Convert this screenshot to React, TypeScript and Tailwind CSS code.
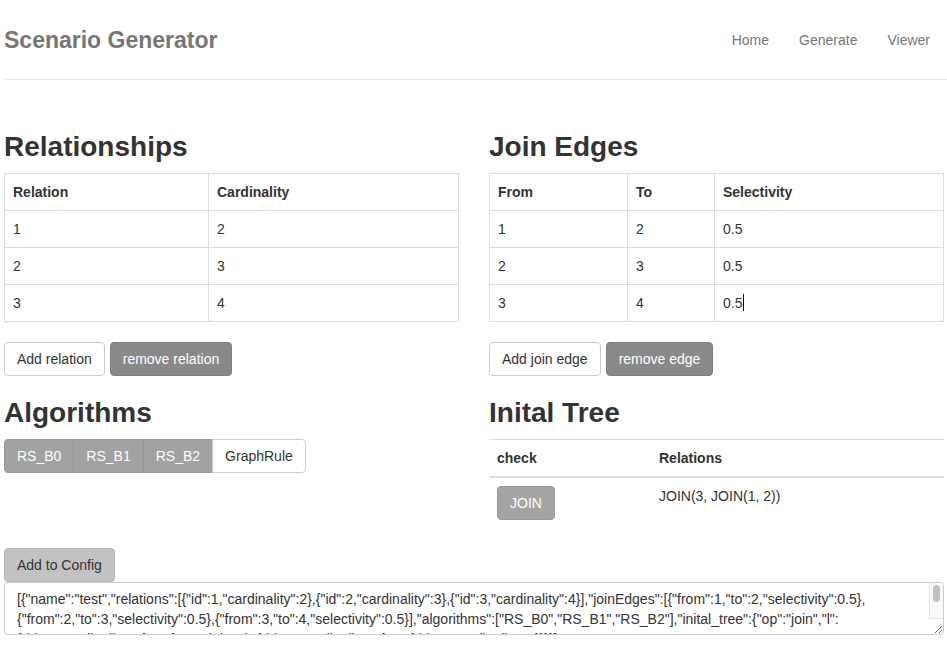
import React from "react";

const font = "font-['Liberation_Sans','Helvetica_Neue',Helvetica,Arial,sans-serif]";

const configJson =
  '[{"name":"test","relations":[{"id":1,"cardinality":2},{"id":2,"cardinality":3},{"id":3,"cardinality":4}],"joinEdges":[{"from":1,"to":2,"selectivity":0.5},{"from":2,"to":3,"selectivity":0.5},{"from":3,"to":4,"selectivity":0.5}],"algorithms":["RS_B0","RS_B1","RS_B2"],"inital_tree":{"op":"join","l":{"id":3,"cardinality":4},"r":{"op":"join","l":{"id":1,"cardinality":2},"r":{"id":2,"cardinality":3}}}}]';

function Heading({ children, first }: { children: React.ReactNode; first?: boolean }) {
  return (
    <h2
      className={`${first ? "mt-[52px]" : "mt-[22px]"} mb-[10px] text-[28px] leading-[1.1] font-bold text-[#333]`}
    >
      {children}
    </h2>
  );
}

function Btn({ children, variant }: { children: React.ReactNode; variant: "default" | "dark" }) {
  const look =
    variant === "default"
      ? "bg-white border-[#ccc] text-[#333]"
      : "bg-[#898989] border-[#7e7e7e] text-white";
  return (
    <button
      type="button"
      className={`inline-flex h-[34px] items-center rounded-[4px] border px-[12px] text-[14px] leading-[20px] ${look}`}
    >
      {children}
    </button>
  );
}

function BorderedTable({ head, rows, widths }: { head: string[]; rows: React.ReactNode[][]; widths: string[] }) {
  return (
    <table className="mb-[20px] w-full border-collapse text-[14px] leading-[20px]">
      <thead>
        <tr>
          {head.map((h, i) => (
            <th key={h} className={`${widths[i]} border border-[#ddd] p-[8px] text-left font-bold`}>
              {h}
            </th>
          ))}
        </tr>
      </thead>
      <tbody>
        {rows.map((r, ri) => (
          <tr key={ri}>
            {r.map((c, ci) => (
              <td key={ci} className="border border-[#ddd] p-[8px]">
                {c}
              </td>
            ))}
          </tr>
        ))}
      </tbody>
    </table>
  );
}

export default function App() {
  return (
    <div className={`${font} min-h-[650px] bg-white pl-[4px] text-[14px] leading-[20px] text-[#333]`}>
      <header className="flex h-[80px] items-center justify-between border-b border-[#e7e7e7] pr-[2px]">
        <span className="text-[23px] font-bold text-[#777]">Scenario Generator</span>
        <nav className="flex text-[14px] text-[#777]">
          <a className="px-[15px]">Home</a>
          <a className="px-[15px]">Generate</a>
          <a className="px-[15px]">Viewer</a>
        </nav>
      </header>

      <main className="mr-[3px]">
        <div className="grid grid-cols-2 gap-x-[30px]">
          <section>
            <Heading first>Relationships</Heading>
            <BorderedTable
              head={["Relation", "Cardinality"]}
              widths={["w-[204px]", ""]}
              rows={[
                ["1", "2"],
                ["2", "3"],
                ["3", "4"],
              ]}
            />
            <div className="flex gap-[5px]">
              <Btn variant="default">Add relation</Btn>
              <Btn variant="dark">remove relation</Btn>
            </div>
            <Heading>Algorithms</Heading>
            <div className="flex">
              {["RS_B0", "RS_B1", "RS_B2"].map((a, i) => (
                <button
                  key={a}
                  type="button"
                  className={`h-[34px] border border-[#959595] bg-[#a2a2a2] px-[12px] text-[14px] text-white ${
                    i === 0 ? "rounded-l-[4px]" : "-ml-px"
                  }`}
                >
                  {a}
                </button>
              ))}
              <button
                type="button"
                className="-ml-px h-[34px] rounded-r-[4px] border border-[#ccc] bg-white px-[12px] text-[14px] text-[#333]"
              >
                GraphRule
              </button>
            </div>
          </section>

          <section>
            <Heading first>Join Edges</Heading>
            <BorderedTable
              head={["From", "To", "Selectivity"]}
              widths={["w-[138px]", "w-[87px]", ""]}
              rows={[
                ["1", "2", "0.5"],
                ["2", "3", "0.5"],
                [
                  "3",
                  "4",
                  <span key="c">
                    0.5<span className="ml-px inline-block h-[17px] w-px bg-black align-[-3px]" />
                  </span>,
                ],
              ]}
            />
            <div className="flex gap-[5px]">
              <Btn variant="default">Add join edge</Btn>
              <Btn variant="dark">remove edge</Btn>
            </div>
            <Heading>Inital Tree</Heading>
            <table className="mb-[20px] w-full border-separate border-spacing-0 text-[14px] leading-[20px]">
              <thead>
                <tr>
                  <th className="w-[162px] border-t border-b-2 border-[#ddd] p-[8px] text-left font-bold">check</th>
                  <th className="border-t border-b-2 border-[#ddd] p-[8px] text-left font-bold">Relations</th>
                </tr>
              </thead>
              <tbody>
                <tr>
                  <td className="p-[8px] align-top">
                    <button
                      type="button"
                      className="h-[34px] rounded-[4px] border border-[#999] bg-[#a4a4a4] px-[12px] text-[14px] text-white"
                    >
                      JOIN
                    </button>
                  </td>
                  <td className="p-[8px] align-top">JOIN(3, JOIN(1, 2))</td>
                </tr>
              </tbody>
            </table>
          </section>
        </div>

        <button
          type="button"
          className="h-[34px] rounded-[4px] border border-[#b5b5b5] bg-[#c2c2c2] px-[12px] text-[14px] text-[#333]"
        >
          Add to Config
        </button>
        <div className="relative">
          <textarea
            readOnly
            value={configJson}
            className="block h-[53px] w-full overflow-hidden rounded-[4px] border border-[#ccc] bg-white py-[6px] pr-[28px] pl-[12px] text-[14px] leading-[20px] text-[#333] outline-none"
          />
          <div className="pointer-events-none absolute top-px right-px flex h-[36px] w-[14px] justify-center rounded-tr-[3px] border-b border-l border-[#e3e3e3] bg-[#fafafa] pt-[2px]">
            <div className="h-[17px] w-[7px] rounded-full bg-[#c1c1c1]" />
          </div>
        </div>
      </main>
    </div>
  );
}
